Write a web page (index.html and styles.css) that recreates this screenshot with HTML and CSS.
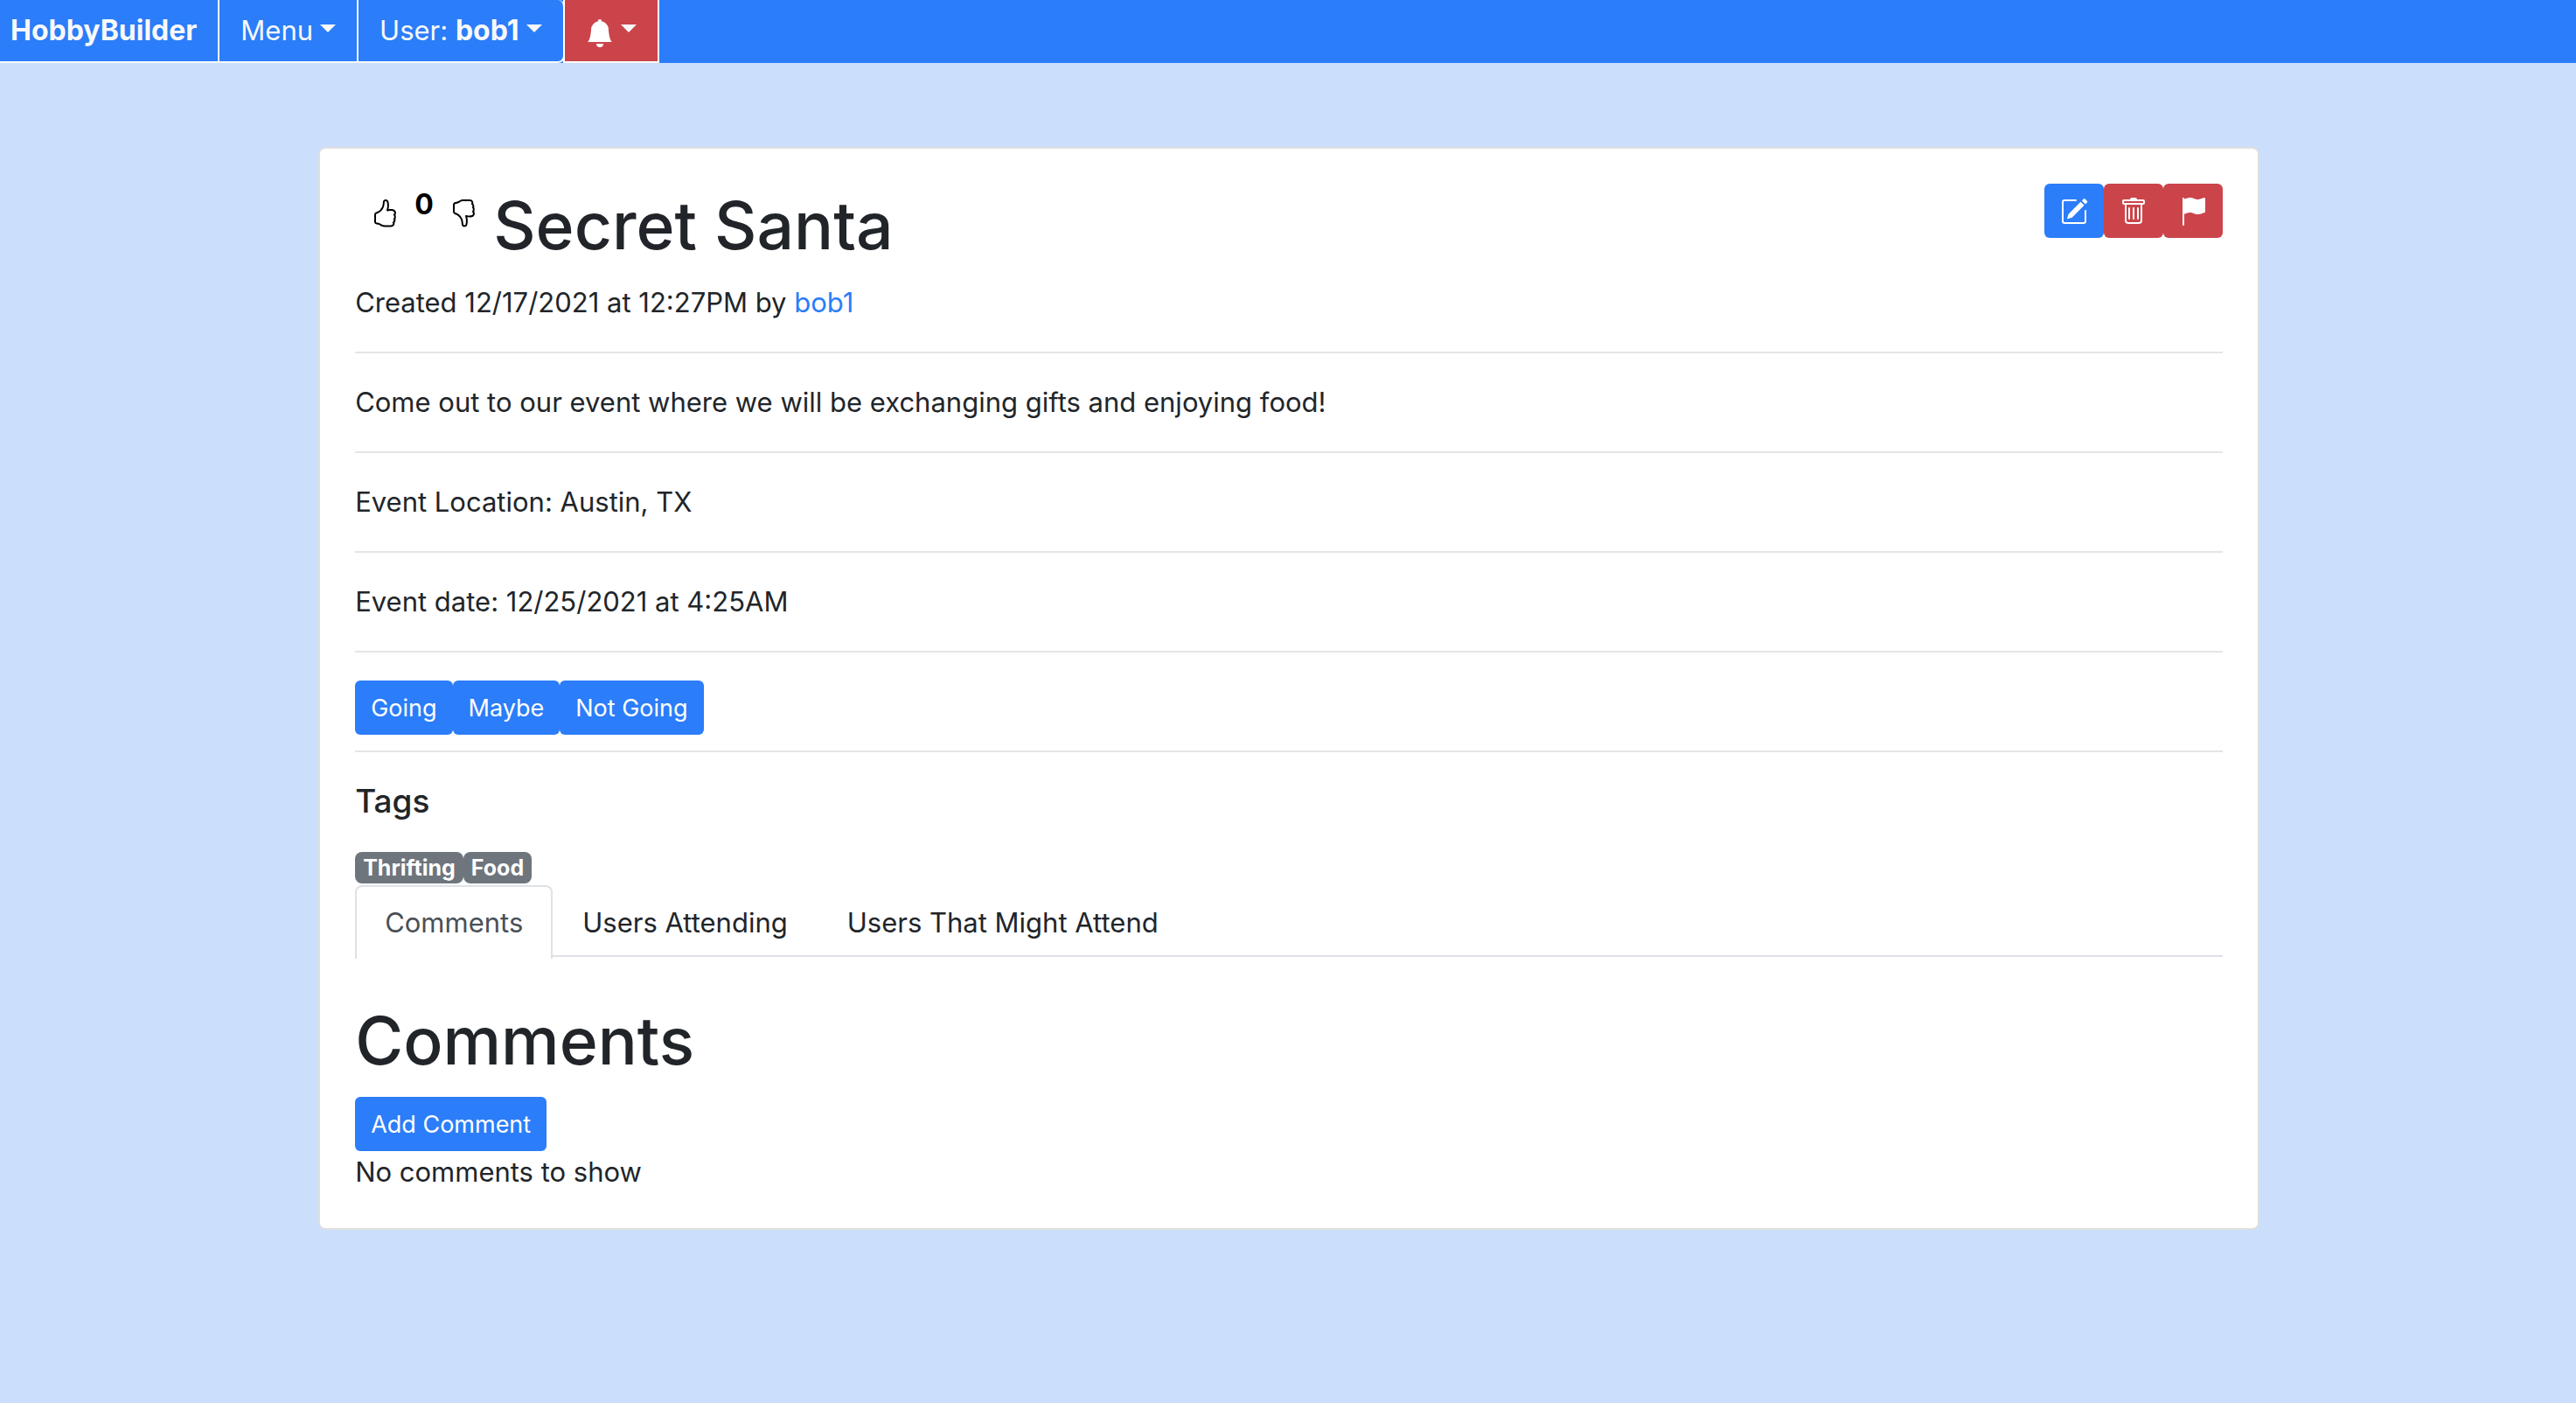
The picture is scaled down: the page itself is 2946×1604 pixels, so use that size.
FILE: index.html
```html
<!DOCTYPE html>
<html lang="en">
<head>
<meta charset="utf-8">
<title>HobbyBuilder</title>
<link rel="stylesheet" href="styles.css">
</head>
<body>
<nav class="navbar">
  <a class="nav-item brand" href="#">HobbyBuilder</a>
  <button class="nav-item" type="button">Menu<span class="caret"></span></button>
  <button class="nav-item nav-user" type="button">User:&nbsp;<b class="nav-name">bob1</b><span class="caret"></span></button>
  <button class="nav-item nav-alerts" type="button" aria-label="Notifications">
    <svg class="icon bell" viewBox="0 0 16 16"><path d="M8 16a2 2 0 0 0 2-2H6a2 2 0 0 0 2 2zm.995-14.901a1 1 0 1 0-1.99 0A5.002 5.002 0 0 0 3 6c0 1.098-.5 6-2 7h14c-1.5-1-2-5.902-2-7 0-2.42-1.72-4.44-4.005-4.901z"/></svg><span class="caret"></span>
  </button>
</nav>
<main class="card">
  <header class="head">
    <button class="vote" type="button" aria-label="Like">
      <svg class="icon" viewBox="0 0 16 16"><path d="M8.864.046C7.908-.193 7.02.53 6.956 1.466c-.072 1.051-.23 2.016-.428 2.59-.125.36-.479 1.013-1.04 1.639-.557.623-1.282 1.178-2.131 1.41C2.685 7.288 2 7.87 2 8.72v4.001c0 .845.682 1.464 1.448 1.545 1.07.114 1.564.415 2.068.723l.048.03c.272.165.578.348.97.484.397.136.861.217 1.466.217h3.5c.937 0 1.599-.477 1.934-1.064a1.86 1.86 0 0 0 .254-.912c0-.152-.023-.312-.077-.464.201-.263.38-.578.488-.901.11-.33.172-.762.004-1.149.069-.13.12-.269.159-.403.077-.27.113-.568.113-.857 0-.288-.036-.585-.113-.856a2.144 2.144 0 0 0-.138-.362 1.9 1.9 0 0 0 .234-1.734c-.206-.592-.682-1.1-1.2-1.272-.847-.282-1.803-.276-2.516-.211a9.84 9.84 0 0 0-.443.05 9.365 9.365 0 0 0-.062-4.509A1.38 1.38 0 0 0 9.125.111L8.864.046zM11.5 14.721H8c-.51 0-.863-.069-1.14-.164-.281-.097-.506-.228-.776-.393l-.04-.024c-.555-.339-1.198-.731-2.49-.868-.333-.036-.554-.29-.554-.55V8.72c0-.254.226-.543.62-.65 1.095-.3 1.977-.996 2.614-1.708.635-.71 1.064-1.475 1.238-1.978.243-.7.407-1.768.482-2.85.025-.362.36-.594.667-.518l.262.066c.16.04.258.143.288.255a8.34 8.34 0 0 1-.145 4.725.5.5 0 0 0 .595.644l.003-.001.014-.003.058-.014a8.908 8.908 0 0 1 1.036-.157c.663-.06 1.457-.054 2.11.164.175.058.45.3.57.65.107.308.087.67-.266 1.022l-.353.353.353.354c.043.043.105.141.154.315.048.167.075.37.075.581 0 .212-.027.414-.075.582-.05.174-.111.272-.154.315l-.353.353.353.354c.047.047.109.177.005.488a2.224 2.224 0 0 1-.505.805l-.353.353.353.354c.006.005.041.05.041.17a.866.866 0 0 1-.121.416c-.165.288-.503.56-1.066.56z"/></svg>
    </button>
    <strong class="score">0</strong>
    <button class="vote" type="button" aria-label="Dislike">
      <svg class="icon" viewBox="0 0 16 16"><path d="M8.864 15.674c-.956.24-1.843-.484-1.908-1.42-.072-1.05-.23-2.015-.428-2.59-.125-.36-.479-1.012-1.04-1.638-.557-.624-1.282-1.179-2.131-1.41C2.685 8.432 2 7.85 2 7V3c0-.845.682-1.464 1.448-1.546 1.07-.113 1.564-.415 2.068-.723l.048-.029c.272-.166.578-.349.97-.484C6.931.08 7.395 0 8 0h3.5c.937 0 1.599.478 1.934 1.064.164.287.254.607.254.913 0 .152-.023.312-.077.464.201.262.38.577.488.9.11.33.172.762.004 1.15.069.13.12.268.159.403.077.27.113.567.113.856 0 .289-.036.586-.113.856-.035.12-.08.244-.138.363.394.571.418 1.2.234 1.733-.206.592-.682 1.1-1.2 1.272-.847.283-1.803.276-2.516.211a9.877 9.877 0 0 1-.443-.05 9.364 9.364 0 0 1-.062 4.51c-.138.508-.55.848-1.012.964l-.261.065zM11.5 1H8c-.51 0-.863.068-1.14.163-.281.097-.506.229-.776.393l-.04.025c-.555.338-1.198.73-2.49.868-.333.035-.554.29-.554.55V7c0 .255.226.543.62.65 1.095.3 1.977.997 2.614 1.709.635.71 1.064 1.475 1.238 1.977.243.7.407 1.768.482 2.85.025.362.36.595.667.518l.262-.065c.16-.04.258-.144.288-.255a8.34 8.34 0 0 0-.145-4.726.5.5 0 0 1 .595-.643h.003l.014.004.058.013a8.912 8.912 0 0 0 1.036.157c.663.06 1.457.054 2.11-.163.175-.059.45-.301.57-.651.107-.308.087-.67-.266-1.021L12.793 7l.353-.354c.043-.042.105-.14.154-.315.048-.167.075-.37.075-.581 0-.211-.027-.414-.075-.581-.05-.174-.111-.273-.154-.315l-.353-.354.353-.354c.047-.047.109-.176.005-.488a2.224 2.224 0 0 0-.505-.804l-.353-.354.353-.354c.006-.005.041-.05.041-.17a.866.866 0 0 0-.121-.415C12.4 1.272 12.063 1 11.5 1z"/></svg>
    </button>
    <h1 class="title">Secret Santa</h1>
    <div class="actions">
      <button class="btn" type="button" aria-label="Edit">
        <svg class="icon" viewBox="0 0 16 16"><path d="M15.502 1.94a.5.5 0 0 1 0 .706L14.459 3.69l-2-2L13.502.646a.5.5 0 0 1 .707 0l1.293 1.293zm-1.75 2.456-2-2L4.939 9.21a.5.5 0 0 0-.121.196l-.805 2.414a.25.25 0 0 0 .316.316l2.414-.805a.5.5 0 0 0 .196-.12l6.813-6.814z"/><path fill-rule="evenodd" d="M1 13.5A1.5 1.5 0 0 0 2.5 15h11a1.5 1.5 0 0 0 1.5-1.5v-6a.5.5 0 0 0-1 0v6a.5.5 0 0 1-.5.5h-11a.5.5 0 0 1-.5-.5v-11a.5.5 0 0 1 .5-.5H9a.5.5 0 0 0 0-1H2.5A1.5 1.5 0 0 0 1 2.5v11z"/></svg>
      </button>
      <button class="btn btn-danger" type="button" aria-label="Delete">
        <svg class="icon" viewBox="0 0 16 16"><path d="M5.5 5.5A.5.5 0 0 1 6 6v6a.5.5 0 0 1-1 0V6a.5.5 0 0 1 .5-.5zm2.5 0a.5.5 0 0 1 .5.5v6a.5.5 0 0 1-1 0V6a.5.5 0 0 1 .5-.5zm3 .5a.5.5 0 0 0-1 0v6a.5.5 0 0 0 1 0V6z"/><path fill-rule="evenodd" d="M14.5 3a1 1 0 0 1-1 1H13v9a2 2 0 0 1-2 2H5a2 2 0 0 1-2-2V4h-.5a1 1 0 0 1-1-1V2a1 1 0 0 1 1-1H6a1 1 0 0 1 1-1h2a1 1 0 0 1 1 1h3.5a1 1 0 0 1 1 1v1zM4.118 4 4 4.059V13a1 1 0 0 0 1 1h6a1 1 0 0 0 1-1V4.059L11.882 4H4.118zM2.5 3V2h11v1h-11z"/></svg>
      </button>
      <button class="btn btn-danger" type="button" aria-label="Report">
        <svg class="icon" viewBox="0 0 16 16"><path d="M14.778.085A.5.5 0 0 1 15 .5V8a.5.5 0 0 1-.314.464L14.5 8l.186.464-.003.001-.006.003-.023.009a12.435 12.435 0 0 1-.397.15c-.264.095-.631.223-1.047.35-.816.252-1.879.523-2.71.523-.847 0-1.548-.28-2.158-.525l-.028-.01C7.68 8.71 7.14 8.5 6.5 8.5c-.7 0-1.638.23-2.437.477A19.626 19.626 0 0 0 3 9.342V15.5a.5.5 0 0 1-1 0V.5a.5.5 0 0 1 1 0v.282c.226-.079.496-.17.79-.26C4.606.272 5.67 0 6.5 0c.84 0 1.524.277 2.121.519l.043.018C9.286.788 9.828 1 10.5 1c.7 0 1.638-.23 2.437-.477a19.587 19.587 0 0 0 1.349-.476l.019-.007.004-.002h.001"/></svg>
      </button>
    </div>
  </header>
  <p class="text">Created 12/17/2021 at 12:27PM by <a class="link" href="#">bob1</a></p>
  <hr class="rule">
  <p class="text">Come out to our event where we will be exchanging gifts and enjoying food!</p>
  <hr class="rule">
  <p class="text">Event Location: Austin, TX</p>
  <hr class="rule">
  <p class="text">Event date: 12/25/2021 at 4:25AM</p>
  <hr class="rule">
  <div class="rsvp">
    <button class="btn" type="button">Going</button>
    <button class="btn" type="button">Maybe</button>
    <button class="btn" type="button">Not Going</button>
  </div>
  <hr class="rule rule-tight">
  <h2 class="subtitle">Tags</h2>
  <div class="tags"><span class="tag">Thrifting</span><span class="tag">Food</span></div>
  <div class="tabs" role="tablist">
    <button class="tab tab-active" type="button" role="tab" aria-selected="true">Comments</button>
    <button class="tab" type="button" role="tab" aria-selected="false">Users Attending</button>
    <button class="tab" type="button" role="tab" aria-selected="false">Users That Might Attend</button>
  </div>
  <section class="comments">
    <h1 class="title">Comments</h1>
    <button class="btn" type="button">Add Comment</button>
    <p class="text">No comments to show</p>
  </section>
</main>
</body>
</html>
```
FILE: styles.css
```css
* { box-sizing: border-box; }

body {
  margin: 0;
  background: #cbdefc;
  color: #212529;
  font: 400 31px/48px Inter, "Liberation Sans", sans-serif;
}

button {
  margin: 0;
  font: inherit;
  color: inherit;
  background: none;
  border: 0;
  cursor: pointer;
}

h1, h2, p { margin: 0; font-weight: 500; }

.icon { display: block; width: 32px; height: 32px; fill: currentColor; }

/* Top bar */
.navbar { display: flex; height: 72px; background: #2b7df9; color: #f8f9fa; }

.nav-item {
  display: flex;
  align-items: center;
  padding: 0 24px;
  border: solid #f8f9fa;
  border-width: 0 2px 2px 0;
  color: #f8f9fa;
  text-decoration: none;
}

.brand { padding-left: 12px; font-size: 32px; font-weight: 700; }
.nav-name { font-size: 32px; }
.nav-user { border-radius: 0 8px 8px 0; }
.nav-alerts {
  margin-left: -2px;
  background: #cb444a;
  color: #fff;
  border-color: #fff;
  border-left-width: 2px;
}
.bell { margin-top: 6px; }

.caret {
  margin-left: 8px;
  margin-bottom: 6px;
  border: 9px solid transparent;
  border-top-color: #f8f9fa;
  border-bottom: 0;
}

/* Event card */
.card {
  margin: 96px 12.29% 0 12.36%;
  padding: 40px;
  background: #fff;
  border: 2px solid #dfdfdf;
  border-radius: 8px;
}

.head { display: flex; align-items: flex-start; margin-bottom: 16px; }
.vote { padding: 18px; color: #000; }
.score { width: 22px; color: #000; text-align: center; font-weight: 700; font-size: 32px; }
.title { font-size: 75px; line-height: 96px; }
.actions { display: flex; margin-left: auto; }

.btn {
  min-height: 62px;
  padding: 11px 18px 9px;
  border-radius: 6px;
  background: #2b7df9;
  color: #fff;
  font-size: 27px;
  line-height: 42px;
}
.btn-danger { background: #cb444a; }

.text { font-weight: 400; }
.link { color: #2b7df9; text-decoration: none; }

.rule { margin: 32px 0; border: 0; border-top: 2px solid #e5e5e5; }
.rule-tight { margin-top: 18px; }
.rsvp { display: flex; }

.subtitle { font-size: 37px; line-height: 48px; }
.tags { display: flex; margin: 34px 0 2px; }
.tag {
  padding: 0 9px;
  border-radius: 8px;
  background: #6e757c;
  color: #fff;
  font-size: 25px;
  font-weight: 700;
  line-height: 36px;
}

/* Tabs */
.tabs { display: flex; height: 82px; border-bottom: 2px solid #dee2e6; }
.tab {
  height: 84px;
  padding: 16px 32px;
  border: 2px solid transparent;
  border-bottom: 0;
  border-radius: 8px 8px 0 0;
}
.tab-active { border-color: #dee2e6; background: #fff; color: #495057; }

.comments { display: flex; flex-direction: column; align-items: flex-start; padding-top: 48px; }
.comments .title { margin-bottom: 16px; }
```
